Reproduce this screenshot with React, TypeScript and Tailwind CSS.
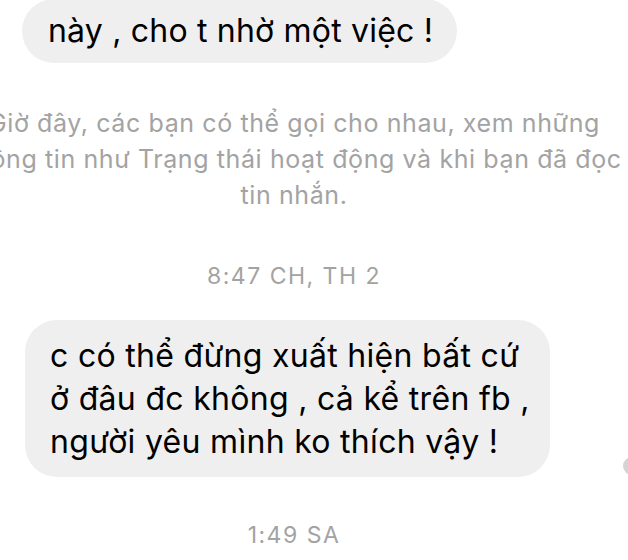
export default function App() {
  return (
    <div className="relative w-[628px] h-[560px] overflow-hidden bg-white font-['Inter','Noto_Sans',sans-serif] text-black">
      {/* first incoming bubble */}
      <div className="flex pl-[22px] -mt-[1px]">
        <div className="flex h-[64px] items-center rounded-full bg-[#efefef] pl-[26px] pr-[24px] text-[32px] tracking-[0.2px]">
          này , cho t nhờ một việc !
        </div>
      </div>

      {/* system notice */}
      <div className="mt-[42px] flex w-[588px] flex-col items-center text-[25px] leading-[36px] text-[#a3a3a3] tracking-[0.6px]">
        <span className="whitespace-nowrap">Giờ đây, các bạn có thể gọi cho nhau, xem những</span>
        <span className="whitespace-nowrap">thông tin như Trạng thái hoạt động và khi bạn đã đọc</span>
        <span className="whitespace-nowrap">tin nhắn.</span>
      </div>

      <div className="mt-[48px] flex w-[588px] justify-center text-[23px] leading-[30px] text-[#a3a3a3] tracking-[1.5px]">
        8:47 CH, TH 2
      </div>

      {/* second incoming bubble */}
      <div className="mt-[29px] flex pl-[25px]">
        <div className="flex w-[525px] flex-col rounded-[32px] bg-[#efefef] py-[14px] pl-[25px] text-[32px] leading-[43px] tracking-[0.3px]">
          <span className="whitespace-nowrap">c có thể đừng xuất hiện bất cứ</span>
          <span className="whitespace-nowrap">ở đâu đc không , cả kể trên fb ,</span>
          <span className="whitespace-nowrap">người yêu mình ko thích vậy !</span>
        </div>
      </div>

      <div className="mt-[43px] flex w-[588px] justify-center text-[23px] leading-[30px] text-[#a3a3a3] tracking-[1.5px]">
        1:49 SA
      </div>

      {/* seen avatar peeking from the right edge */}
      <div className="absolute left-[623px] top-[457px] h-[18px] w-[18px] rounded-full bg-[#d4d4d4]" />
    </div>
  );
}
